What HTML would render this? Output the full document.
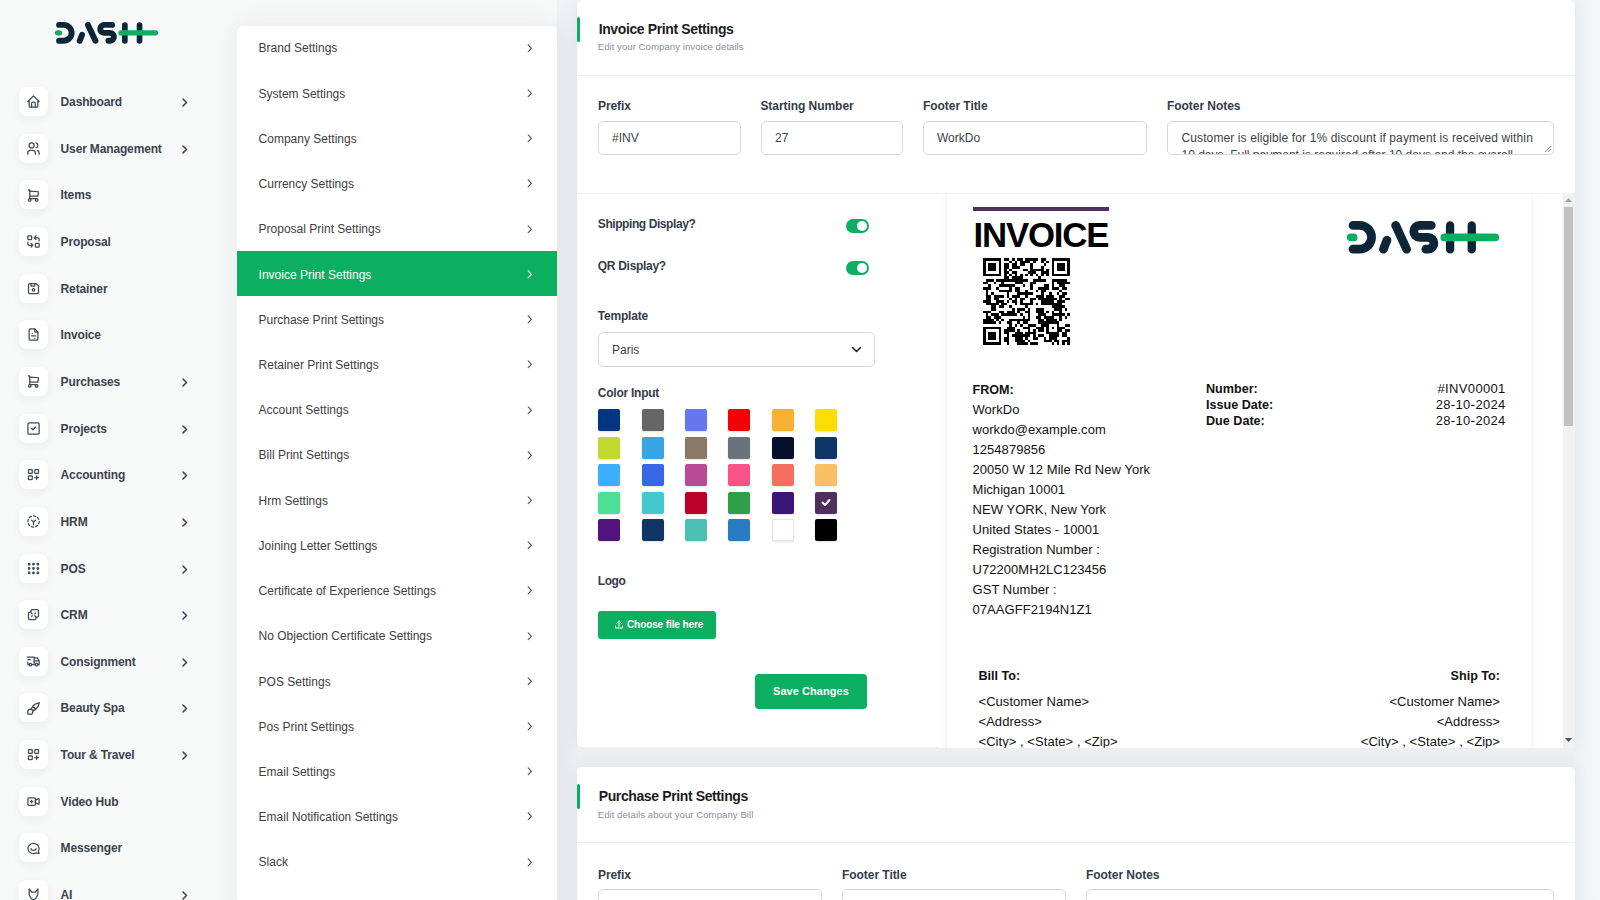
<!DOCTYPE html><html><head><meta charset="utf-8"><style>
*{box-sizing:border-box;margin:0;padding:0}
html,body{width:1600px;height:900px;overflow:hidden}
body{position:relative;background:#f6f7f8;font-family:"Liberation Sans",sans-serif}
.t{position:absolute;white-space:nowrap}
.abs{position:absolute}
</style></head><body>
<div class="abs" style="left:0;top:0;width:557px;height:900px;background:#f7f8f8"></div>
<div class="abs" style="left:557px;top:0;width:20px;height:900px;background:linear-gradient(180deg,#f0f2f4 0px,#eceef1 40px)"></div>
<div class="abs" style="left:1575px;top:0;width:25px;height:900px;background:linear-gradient(90deg,#eef0f2 0%,#f2f4f5 50%,#f4f6f6 100%)"></div>
<svg class="abs" style="left:54.7px;top:22.2px" width="103.1" height="21.9" viewBox="105 100 1390 300" preserveAspectRatio="none"><g fill="none" stroke-linecap="round">
<path d="M160 140 H221 A108.5 108.5 0 0 1 221 357 H160" stroke="#0c2638" stroke-width="80"/>
<path d="M438 358 L470 275 M550 140 L650 358" stroke="#0c2638" stroke-width="80"/>
<path d="M875 140 H770 A55 55 0 0 0 770 250 H846 A53.5 53.5 0 0 1 846 357 H825" stroke="#0c2638" stroke-width="80"/>
<path d="M1047 140 V360 M1245 140 V360" stroke="#0c2638" stroke-width="76"/>
<path d="M140 250 H165 M995 250 H1460" stroke="#0caf60" stroke-width="72"/>
</g></svg>
<div class="abs" style="left:18.5px;top:87.00px;width:29px;height:29px;border-radius:8px;background:#fff;box-shadow:0 3px 8px rgba(60,70,90,.06)"></div>
<svg class="abs" style="left:25.5px;top:94.20px" width="15" height="15" viewBox="0 0 24 24" fill="none" stroke="#3f4958" stroke-width="2" stroke-linecap="round" stroke-linejoin="round"><path d="M5 12H3l9-9 9 9h-2"/><path d="M5 12v7a2 2 0 0 0 2 2h10a2 2 0 0 0 2-2v-7"/><path d="M9 21v-6a2 2 0 0 1 2-2h2a2 2 0 0 1 2 2v6"/></svg>
<div class="t" style="left:60.6px;top:96.04px;font-size:12px;line-height:12px;font-weight:700;color:#3c434e;letter-spacing:-0.15px;">Dashboard</div>
<svg class="abs" style="left:181px;top:98.00px" width="8" height="9" viewBox="0 0 8 9"><path d="M2 1l3.5 3.5L2 8" fill="none" stroke="#3a4250" stroke-width="1.5" stroke-linecap="round" stroke-linejoin="round"/></svg>
<div class="abs" style="left:18.5px;top:133.65px;width:29px;height:29px;border-radius:8px;background:#fff;box-shadow:0 3px 8px rgba(60,70,90,.06)"></div>
<svg class="abs" style="left:25.5px;top:140.85px" width="15" height="15" viewBox="0 0 24 24" fill="none" stroke="#3f4958" stroke-width="2" stroke-linecap="round" stroke-linejoin="round"><circle cx="9" cy="7" r="4"/><path d="M3 21v-2a4 4 0 0 1 4-4h4a4 4 0 0 1 4 4v2"/><path d="M16 3.13a4 4 0 0 1 0 7.75"/><path d="M21 21v-2a4 4 0 0 0-3-3.85"/></svg>
<div class="t" style="left:60.6px;top:142.69px;font-size:12px;line-height:12px;font-weight:700;color:#3c434e;letter-spacing:-0.15px;">User Management</div>
<svg class="abs" style="left:181px;top:144.65px" width="8" height="9" viewBox="0 0 8 9"><path d="M2 1l3.5 3.5L2 8" fill="none" stroke="#3a4250" stroke-width="1.5" stroke-linecap="round" stroke-linejoin="round"/></svg>
<div class="abs" style="left:18.5px;top:180.30px;width:29px;height:29px;border-radius:8px;background:#fff;box-shadow:0 3px 8px rgba(60,70,90,.06)"></div>
<svg class="abs" style="left:25.5px;top:187.50px" width="15" height="15" viewBox="0 0 24 24" fill="none" stroke="#3f4958" stroke-width="2" stroke-linecap="round" stroke-linejoin="round"><circle cx="6" cy="19" r="2"/><circle cx="17" cy="19" r="2"/><path d="M17 17H6V3H4"/><path d="M6 5l14 1-1 7H6"/></svg>
<div class="t" style="left:60.6px;top:189.34px;font-size:12px;line-height:12px;font-weight:700;color:#3c434e;letter-spacing:-0.15px;">Items</div>
<div class="abs" style="left:18.5px;top:226.95px;width:29px;height:29px;border-radius:8px;background:#fff;box-shadow:0 3px 8px rgba(60,70,90,.06)"></div>
<svg class="abs" style="left:25.5px;top:234.15px" width="15" height="15" viewBox="0 0 24 24" fill="none" stroke="#3f4958" stroke-width="2" stroke-linecap="round" stroke-linejoin="round"><rect x="3" y="3" width="6" height="6" rx="1"/><rect x="15" y="15" width="6" height="6" rx="1"/><path d="M21 11V8a2 2 0 0 0-2-2h-6l3 3m0-6-3 3"/><path d="M3 13v3a2 2 0 0 0 2 2h6l-3-3m0 6 3-3"/></svg>
<div class="t" style="left:60.6px;top:235.99px;font-size:12px;line-height:12px;font-weight:700;color:#3c434e;letter-spacing:-0.15px;">Proposal</div>
<div class="abs" style="left:18.5px;top:273.60px;width:29px;height:29px;border-radius:8px;background:#fff;box-shadow:0 3px 8px rgba(60,70,90,.06)"></div>
<svg class="abs" style="left:25.5px;top:280.80px" width="15" height="15" viewBox="0 0 24 24" fill="none" stroke="#3f4958" stroke-width="2" stroke-linecap="round" stroke-linejoin="round"><path d="M6 4h10l4 4v10a2 2 0 0 1-2 2H6a2 2 0 0 1-2-2V6a2 2 0 0 1 2-2"/><circle cx="12" cy="14" r="2"/><path d="M14 4v4H8V4"/></svg>
<div class="t" style="left:60.6px;top:282.64px;font-size:12px;line-height:12px;font-weight:700;color:#3c434e;letter-spacing:-0.15px;">Retainer</div>
<div class="abs" style="left:18.5px;top:320.25px;width:29px;height:29px;border-radius:8px;background:#fff;box-shadow:0 3px 8px rgba(60,70,90,.06)"></div>
<svg class="abs" style="left:25.5px;top:327.45px" width="15" height="15" viewBox="0 0 24 24" fill="none" stroke="#3f4958" stroke-width="2" stroke-linecap="round" stroke-linejoin="round"><path d="M14 3v4a1 1 0 0 0 1 1h4"/><path d="M17 21H7a2 2 0 0 1-2-2V5a2 2 0 0 1 2-2h7l5 5v11a2 2 0 0 1-2 2z"/><path d="M9 14h6"/><path d="M10 10v.01M14 18v.01"/></svg>
<div class="t" style="left:60.6px;top:329.29px;font-size:12px;line-height:12px;font-weight:700;color:#3c434e;letter-spacing:-0.15px;">Invoice</div>
<div class="abs" style="left:18.5px;top:366.90px;width:29px;height:29px;border-radius:8px;background:#fff;box-shadow:0 3px 8px rgba(60,70,90,.06)"></div>
<svg class="abs" style="left:25.5px;top:374.10px" width="15" height="15" viewBox="0 0 24 24" fill="none" stroke="#3f4958" stroke-width="2" stroke-linecap="round" stroke-linejoin="round"><circle cx="6" cy="19" r="2"/><circle cx="17" cy="19" r="2"/><path d="M17 17H6V3H4"/><path d="M6 5l14 1-1 7H6"/></svg>
<div class="t" style="left:60.6px;top:375.94px;font-size:12px;line-height:12px;font-weight:700;color:#3c434e;letter-spacing:-0.15px;">Purchases</div>
<svg class="abs" style="left:181px;top:377.90px" width="8" height="9" viewBox="0 0 8 9"><path d="M2 1l3.5 3.5L2 8" fill="none" stroke="#3a4250" stroke-width="1.5" stroke-linecap="round" stroke-linejoin="round"/></svg>
<div class="abs" style="left:18.5px;top:413.55px;width:29px;height:29px;border-radius:8px;background:#fff;box-shadow:0 3px 8px rgba(60,70,90,.06)"></div>
<svg class="abs" style="left:25.5px;top:420.75px" width="15" height="15" viewBox="0 0 24 24" fill="none" stroke="#3f4958" stroke-width="2" stroke-linecap="round" stroke-linejoin="round"><rect x="3" y="3" width="18" height="18" rx="2"/><path d="M9 12l2 2 4-4"/></svg>
<div class="t" style="left:60.6px;top:422.59px;font-size:12px;line-height:12px;font-weight:700;color:#3c434e;letter-spacing:-0.15px;">Projects</div>
<svg class="abs" style="left:181px;top:424.55px" width="8" height="9" viewBox="0 0 8 9"><path d="M2 1l3.5 3.5L2 8" fill="none" stroke="#3a4250" stroke-width="1.5" stroke-linecap="round" stroke-linejoin="round"/></svg>
<div class="abs" style="left:18.5px;top:460.20px;width:29px;height:29px;border-radius:8px;background:#fff;box-shadow:0 3px 8px rgba(60,70,90,.06)"></div>
<svg class="abs" style="left:25.5px;top:467.40px" width="15" height="15" viewBox="0 0 24 24" fill="none" stroke="#3f4958" stroke-width="2" stroke-linecap="round" stroke-linejoin="round"><rect x="4" y="4" width="6" height="6" rx="1"/><rect x="14" y="4" width="6" height="6" rx="1"/><rect x="4" y="14" width="6" height="6" rx="1"/><path d="M14 17h6m-3-3v6"/></svg>
<div class="t" style="left:60.6px;top:469.24px;font-size:12px;line-height:12px;font-weight:700;color:#3c434e;letter-spacing:-0.15px;">Accounting</div>
<svg class="abs" style="left:181px;top:471.20px" width="8" height="9" viewBox="0 0 8 9"><path d="M2 1l3.5 3.5L2 8" fill="none" stroke="#3a4250" stroke-width="1.5" stroke-linecap="round" stroke-linejoin="round"/></svg>
<div class="abs" style="left:18.5px;top:506.85px;width:29px;height:29px;border-radius:8px;background:#fff;box-shadow:0 3px 8px rgba(60,70,90,.06)"></div>
<svg class="abs" style="left:25.5px;top:514.05px" width="15" height="15" viewBox="0 0 24 24" fill="none" stroke="#3f4958" stroke-width="2" stroke-linecap="round" stroke-linejoin="round"><path d="M8.56 3.69a9 9 0 0 0-2.92 1.95M3.69 8.56A9 9 0 0 0 3 12M3.69 15.44a9 9 0 0 0 1.95 2.92M8.56 20.31A9 9 0 0 0 12 21M15.44 20.31a9 9 0 0 0 2.92-1.95M20.31 15.44A9 9 0 0 0 21 12M20.31 8.56a9 9 0 0 0-1.95-2.92M15.44 3.69A9 9 0 0 0 12 3"/><path d="M9 10l3 3 3-3M12 13v4"/></svg>
<div class="t" style="left:60.6px;top:515.89px;font-size:12px;line-height:12px;font-weight:700;color:#3c434e;letter-spacing:-0.15px;">HRM</div>
<svg class="abs" style="left:181px;top:517.85px" width="8" height="9" viewBox="0 0 8 9"><path d="M2 1l3.5 3.5L2 8" fill="none" stroke="#3a4250" stroke-width="1.5" stroke-linecap="round" stroke-linejoin="round"/></svg>
<div class="abs" style="left:18.5px;top:553.50px;width:29px;height:29px;border-radius:8px;background:#fff;box-shadow:0 3px 8px rgba(60,70,90,.06)"></div>
<svg class="abs" style="left:25.5px;top:560.70px" width="15" height="15" viewBox="0 0 24 24" fill="none" stroke="#3f4958" stroke-width="2" stroke-linecap="round" stroke-linejoin="round"><circle cx="5" cy="5" r="1.3"/><circle cx="12" cy="5" r="1.3"/><circle cx="19" cy="5" r="1.3"/><circle cx="5" cy="12" r="1.3"/><circle cx="12" cy="12" r="1.3"/><circle cx="19" cy="12" r="1.3"/><circle cx="5" cy="19" r="1.3"/><circle cx="12" cy="19" r="1.3"/><circle cx="19" cy="19" r="1.3"/></svg>
<div class="t" style="left:60.6px;top:562.54px;font-size:12px;line-height:12px;font-weight:700;color:#3c434e;letter-spacing:-0.15px;">POS</div>
<svg class="abs" style="left:181px;top:564.50px" width="8" height="9" viewBox="0 0 8 9"><path d="M2 1l3.5 3.5L2 8" fill="none" stroke="#3a4250" stroke-width="1.5" stroke-linecap="round" stroke-linejoin="round"/></svg>
<div class="abs" style="left:18.5px;top:600.15px;width:29px;height:29px;border-radius:8px;background:#fff;box-shadow:0 3px 8px rgba(60,70,90,.06)"></div>
<svg class="abs" style="left:25.5px;top:607.35px" width="15" height="15" viewBox="0 0 24 24" fill="none" stroke="#3f4958" stroke-width="2" stroke-linecap="round" stroke-linejoin="round"><path d="M8 8h-2a2 2 0 0 0-2 2v8a2 2 0 0 0 2 2h8a2 2 0 0 0 2-2v-2"/><path d="M8 8V6a2 2 0 0 1 2-2h8a2 2 0 0 1 2 2v8a2 2 0 0 1-2 2h-2"/><path d="M9 10l1 1M15 10l-1 1M9 15l1-1M15 15l-1-1"/></svg>
<div class="t" style="left:60.6px;top:609.19px;font-size:12px;line-height:12px;font-weight:700;color:#3c434e;letter-spacing:-0.15px;">CRM</div>
<svg class="abs" style="left:181px;top:611.15px" width="8" height="9" viewBox="0 0 8 9"><path d="M2 1l3.5 3.5L2 8" fill="none" stroke="#3a4250" stroke-width="1.5" stroke-linecap="round" stroke-linejoin="round"/></svg>
<div class="abs" style="left:18.5px;top:646.80px;width:29px;height:29px;border-radius:8px;background:#fff;box-shadow:0 3px 8px rgba(60,70,90,.06)"></div>
<svg class="abs" style="left:25.5px;top:654.00px" width="15" height="15" viewBox="0 0 24 24" fill="none" stroke="#3f4958" stroke-width="2" stroke-linecap="round" stroke-linejoin="round"><circle cx="7" cy="17" r="2"/><circle cx="17" cy="17" r="2"/><path d="M5 17H3v-4M2 5h11v12m-4 0h6m4 0h2v-6h-8m0-5h5l3 5"/><path d="M3 9h4"/></svg>
<div class="t" style="left:60.6px;top:655.84px;font-size:12px;line-height:12px;font-weight:700;color:#3c434e;letter-spacing:-0.15px;">Consignment</div>
<svg class="abs" style="left:181px;top:657.80px" width="8" height="9" viewBox="0 0 8 9"><path d="M2 1l3.5 3.5L2 8" fill="none" stroke="#3a4250" stroke-width="1.5" stroke-linecap="round" stroke-linejoin="round"/></svg>
<div class="abs" style="left:18.5px;top:693.45px;width:29px;height:29px;border-radius:8px;background:#fff;box-shadow:0 3px 8px rgba(60,70,90,.06)"></div>
<svg class="abs" style="left:25.5px;top:700.65px" width="15" height="15" viewBox="0 0 24 24" fill="none" stroke="#3f4958" stroke-width="2" stroke-linecap="round" stroke-linejoin="round"><path d="M3 21v-4a4 4 0 1 1 4 4H3"/><path d="M21 3A16 16 0 0 0 8.2 13.2"/><path d="M21 3a16 16 0 0 1-10.2 12.8"/><path d="M10.6 9a9 9 0 0 1 4.4 4.4"/></svg>
<div class="t" style="left:60.6px;top:702.49px;font-size:12px;line-height:12px;font-weight:700;color:#3c434e;letter-spacing:-0.15px;">Beauty Spa</div>
<svg class="abs" style="left:181px;top:704.45px" width="8" height="9" viewBox="0 0 8 9"><path d="M2 1l3.5 3.5L2 8" fill="none" stroke="#3a4250" stroke-width="1.5" stroke-linecap="round" stroke-linejoin="round"/></svg>
<div class="abs" style="left:18.5px;top:740.10px;width:29px;height:29px;border-radius:8px;background:#fff;box-shadow:0 3px 8px rgba(60,70,90,.06)"></div>
<svg class="abs" style="left:25.5px;top:747.30px" width="15" height="15" viewBox="0 0 24 24" fill="none" stroke="#3f4958" stroke-width="2" stroke-linecap="round" stroke-linejoin="round"><rect x="4" y="4" width="6" height="6" rx="1"/><rect x="14" y="4" width="6" height="6" rx="1"/><rect x="4" y="14" width="6" height="6" rx="1"/><path d="M14 17h6m-3-3v6"/></svg>
<div class="t" style="left:60.6px;top:749.14px;font-size:12px;line-height:12px;font-weight:700;color:#3c434e;letter-spacing:-0.15px;">Tour &amp; Travel</div>
<svg class="abs" style="left:181px;top:751.10px" width="8" height="9" viewBox="0 0 8 9"><path d="M2 1l3.5 3.5L2 8" fill="none" stroke="#3a4250" stroke-width="1.5" stroke-linecap="round" stroke-linejoin="round"/></svg>
<div class="abs" style="left:18.5px;top:786.75px;width:29px;height:29px;border-radius:8px;background:#fff;box-shadow:0 3px 8px rgba(60,70,90,.06)"></div>
<svg class="abs" style="left:25.5px;top:793.95px" width="15" height="15" viewBox="0 0 24 24" fill="none" stroke="#3f4958" stroke-width="2" stroke-linecap="round" stroke-linejoin="round"><path d="M15 10l4.553-2.276A1 1 0 0 1 21 8.618v6.764a1 1 0 0 1-1.447.894L15 14v-4z"/><rect x="3" y="6" width="12" height="12" rx="2"/><path d="M7 12h4M9 10v4"/></svg>
<div class="t" style="left:60.6px;top:795.79px;font-size:12px;line-height:12px;font-weight:700;color:#3c434e;letter-spacing:-0.15px;">Video Hub</div>
<div class="abs" style="left:18.5px;top:833.40px;width:29px;height:29px;border-radius:8px;background:#fff;box-shadow:0 3px 8px rgba(60,70,90,.06)"></div>
<svg class="abs" style="left:25.5px;top:840.60px" width="15" height="15" viewBox="0 0 24 24" fill="none" stroke="#3f4958" stroke-width="2" stroke-linecap="round" stroke-linejoin="round"><path d="M21 20l-1.3-3.9A9 8 0 1 0 16.3 19L21 20"/><path d="M8 12a4 3 0 0 0 8 0"/></svg>
<div class="t" style="left:60.6px;top:842.44px;font-size:12px;line-height:12px;font-weight:700;color:#3c434e;letter-spacing:-0.15px;">Messenger</div>
<div class="abs" style="left:18.5px;top:880.05px;width:29px;height:29px;border-radius:8px;background:#fff;box-shadow:0 3px 8px rgba(60,70,90,.06)"></div>
<svg class="abs" style="left:25.5px;top:887.25px" width="15" height="15" viewBox="0 0 24 24" fill="none" stroke="#3f4958" stroke-width="2" stroke-linecap="round" stroke-linejoin="round"><path d="M5 3l4 5h6l4-5v9l-3 6-4 3-4-3-3-6z"/></svg>
<div class="t" style="left:60.6px;top:889.09px;font-size:12px;line-height:12px;font-weight:700;color:#3c434e;letter-spacing:-0.15px;">AI</div>
<svg class="abs" style="left:181px;top:891.05px" width="8" height="9" viewBox="0 0 8 9"><path d="M2 1l3.5 3.5L2 8" fill="none" stroke="#3a4250" stroke-width="1.5" stroke-linecap="round" stroke-linejoin="round"/></svg>
<div class="abs" style="left:237px;top:26px;width:320px;height:900px;background:#fff;border-radius:6px;box-shadow:0 0 28px rgba(40,50,70,.075)"></div>
<div class="t" style="left:258.6px;top:42.44px;font-size:12px;line-height:12px;font-weight:400;color:#404040;letter-spacing:0px;">Brand Settings</div>
<svg class="abs" style="left:526px;top:43.75px" width="8" height="9" viewBox="0 0 8 9"><path d="M2.2 0.9l3.2 3.4-3.2 3.4" fill="none" stroke="#555" stroke-width="1.15" stroke-linecap="round" stroke-linejoin="round"/></svg>
<div class="t" style="left:258.6px;top:87.66px;font-size:12px;line-height:12px;font-weight:400;color:#404040;letter-spacing:0px;">System Settings</div>
<svg class="abs" style="left:526px;top:88.97px" width="8" height="9" viewBox="0 0 8 9"><path d="M2.2 0.9l3.2 3.4-3.2 3.4" fill="none" stroke="#555" stroke-width="1.15" stroke-linecap="round" stroke-linejoin="round"/></svg>
<div class="t" style="left:258.6px;top:132.88px;font-size:12px;line-height:12px;font-weight:400;color:#404040;letter-spacing:0px;">Company Settings</div>
<svg class="abs" style="left:526px;top:134.19px" width="8" height="9" viewBox="0 0 8 9"><path d="M2.2 0.9l3.2 3.4-3.2 3.4" fill="none" stroke="#555" stroke-width="1.15" stroke-linecap="round" stroke-linejoin="round"/></svg>
<div class="t" style="left:258.6px;top:178.10px;font-size:12px;line-height:12px;font-weight:400;color:#404040;letter-spacing:0px;">Currency Settings</div>
<svg class="abs" style="left:526px;top:179.41px" width="8" height="9" viewBox="0 0 8 9"><path d="M2.2 0.9l3.2 3.4-3.2 3.4" fill="none" stroke="#555" stroke-width="1.15" stroke-linecap="round" stroke-linejoin="round"/></svg>
<div class="t" style="left:258.6px;top:223.32px;font-size:12px;line-height:12px;font-weight:400;color:#404040;letter-spacing:0px;">Proposal Print Settings</div>
<svg class="abs" style="left:526px;top:224.63px" width="8" height="9" viewBox="0 0 8 9"><path d="M2.2 0.9l3.2 3.4-3.2 3.4" fill="none" stroke="#555" stroke-width="1.15" stroke-linecap="round" stroke-linejoin="round"/></svg>
<div class="abs" style="left:237px;top:250.85px;width:320px;height:45px;background:#0caf60"></div>
<div class="t" style="left:258.6px;top:268.54px;font-size:12px;line-height:12px;font-weight:400;color:#ffffff;letter-spacing:0px;">Invoice Print Settings</div>
<svg class="abs" style="left:526px;top:269.85px" width="8" height="9" viewBox="0 0 8 9"><path d="M2.2 0.9l3.2 3.4-3.2 3.4" fill="none" stroke="#fff" stroke-width="1.15" stroke-linecap="round" stroke-linejoin="round"/></svg>
<div class="t" style="left:258.6px;top:313.76px;font-size:12px;line-height:12px;font-weight:400;color:#404040;letter-spacing:0px;">Purchase Print Settings</div>
<svg class="abs" style="left:526px;top:315.07px" width="8" height="9" viewBox="0 0 8 9"><path d="M2.2 0.9l3.2 3.4-3.2 3.4" fill="none" stroke="#555" stroke-width="1.15" stroke-linecap="round" stroke-linejoin="round"/></svg>
<div class="t" style="left:258.6px;top:358.98px;font-size:12px;line-height:12px;font-weight:400;color:#404040;letter-spacing:0px;">Retainer Print Settings</div>
<svg class="abs" style="left:526px;top:360.29px" width="8" height="9" viewBox="0 0 8 9"><path d="M2.2 0.9l3.2 3.4-3.2 3.4" fill="none" stroke="#555" stroke-width="1.15" stroke-linecap="round" stroke-linejoin="round"/></svg>
<div class="t" style="left:258.6px;top:404.20px;font-size:12px;line-height:12px;font-weight:400;color:#404040;letter-spacing:0px;">Account Settings</div>
<svg class="abs" style="left:526px;top:405.51px" width="8" height="9" viewBox="0 0 8 9"><path d="M2.2 0.9l3.2 3.4-3.2 3.4" fill="none" stroke="#555" stroke-width="1.15" stroke-linecap="round" stroke-linejoin="round"/></svg>
<div class="t" style="left:258.6px;top:449.42px;font-size:12px;line-height:12px;font-weight:400;color:#404040;letter-spacing:0px;">Bill Print Settings</div>
<svg class="abs" style="left:526px;top:450.73px" width="8" height="9" viewBox="0 0 8 9"><path d="M2.2 0.9l3.2 3.4-3.2 3.4" fill="none" stroke="#555" stroke-width="1.15" stroke-linecap="round" stroke-linejoin="round"/></svg>
<div class="t" style="left:258.6px;top:494.64px;font-size:12px;line-height:12px;font-weight:400;color:#404040;letter-spacing:0px;">Hrm Settings</div>
<svg class="abs" style="left:526px;top:495.95px" width="8" height="9" viewBox="0 0 8 9"><path d="M2.2 0.9l3.2 3.4-3.2 3.4" fill="none" stroke="#555" stroke-width="1.15" stroke-linecap="round" stroke-linejoin="round"/></svg>
<div class="t" style="left:258.6px;top:539.86px;font-size:12px;line-height:12px;font-weight:400;color:#404040;letter-spacing:0px;">Joining Letter Settings</div>
<svg class="abs" style="left:526px;top:541.17px" width="8" height="9" viewBox="0 0 8 9"><path d="M2.2 0.9l3.2 3.4-3.2 3.4" fill="none" stroke="#555" stroke-width="1.15" stroke-linecap="round" stroke-linejoin="round"/></svg>
<div class="t" style="left:258.6px;top:585.08px;font-size:12px;line-height:12px;font-weight:400;color:#404040;letter-spacing:0px;">Certificate of Experience Settings</div>
<svg class="abs" style="left:526px;top:586.39px" width="8" height="9" viewBox="0 0 8 9"><path d="M2.2 0.9l3.2 3.4-3.2 3.4" fill="none" stroke="#555" stroke-width="1.15" stroke-linecap="round" stroke-linejoin="round"/></svg>
<div class="t" style="left:258.6px;top:630.30px;font-size:12px;line-height:12px;font-weight:400;color:#404040;letter-spacing:0px;">No Objection Certificate Settings</div>
<svg class="abs" style="left:526px;top:631.61px" width="8" height="9" viewBox="0 0 8 9"><path d="M2.2 0.9l3.2 3.4-3.2 3.4" fill="none" stroke="#555" stroke-width="1.15" stroke-linecap="round" stroke-linejoin="round"/></svg>
<div class="t" style="left:258.6px;top:675.52px;font-size:12px;line-height:12px;font-weight:400;color:#404040;letter-spacing:0px;">POS Settings</div>
<svg class="abs" style="left:526px;top:676.83px" width="8" height="9" viewBox="0 0 8 9"><path d="M2.2 0.9l3.2 3.4-3.2 3.4" fill="none" stroke="#555" stroke-width="1.15" stroke-linecap="round" stroke-linejoin="round"/></svg>
<div class="t" style="left:258.6px;top:720.74px;font-size:12px;line-height:12px;font-weight:400;color:#404040;letter-spacing:0px;">Pos Print Settings</div>
<svg class="abs" style="left:526px;top:722.05px" width="8" height="9" viewBox="0 0 8 9"><path d="M2.2 0.9l3.2 3.4-3.2 3.4" fill="none" stroke="#555" stroke-width="1.15" stroke-linecap="round" stroke-linejoin="round"/></svg>
<div class="t" style="left:258.6px;top:765.96px;font-size:12px;line-height:12px;font-weight:400;color:#404040;letter-spacing:0px;">Email Settings</div>
<svg class="abs" style="left:526px;top:767.27px" width="8" height="9" viewBox="0 0 8 9"><path d="M2.2 0.9l3.2 3.4-3.2 3.4" fill="none" stroke="#555" stroke-width="1.15" stroke-linecap="round" stroke-linejoin="round"/></svg>
<div class="t" style="left:258.6px;top:811.18px;font-size:12px;line-height:12px;font-weight:400;color:#404040;letter-spacing:0px;">Email Notification Settings</div>
<svg class="abs" style="left:526px;top:812.49px" width="8" height="9" viewBox="0 0 8 9"><path d="M2.2 0.9l3.2 3.4-3.2 3.4" fill="none" stroke="#555" stroke-width="1.15" stroke-linecap="round" stroke-linejoin="round"/></svg>
<div class="t" style="left:258.6px;top:856.40px;font-size:12px;line-height:12px;font-weight:400;color:#404040;letter-spacing:0px;">Slack</div>
<svg class="abs" style="left:526px;top:857.71px" width="8" height="9" viewBox="0 0 8 9"><path d="M2.2 0.9l3.2 3.4-3.2 3.4" fill="none" stroke="#555" stroke-width="1.15" stroke-linecap="round" stroke-linejoin="round"/></svg>
<div class="abs" style="left:577px;top:0;width:998px;height:747px;background:#fff;border-radius:8px 8px 0 6px;box-shadow:0 0 20px rgba(40,50,70,.05)"></div>
<div class="abs" style="left:576.5px;top:16.7px;width:3px;height:25.2px;border-radius:2px;background:#0caf60"></div>
<div class="t" style="left:598.7px;top:21.55px;font-size:14px;line-height:14px;font-weight:700;color:#1c1c1c;letter-spacing:-0.38px;">Invoice Print Settings</div>
<div class="t" style="left:597.7px;top:41.79px;font-size:9.7px;line-height:9.7px;font-weight:400;color:#8a93a1;letter-spacing:0px;">Edit your Company invoice details</div>
<div class="abs" style="left:577px;top:75px;width:998px;height:1px;background:#eff1f3"></div>
<div class="t" style="left:598px;top:99.84px;font-size:12px;line-height:12px;font-weight:700;color:#333c4a;letter-spacing:-0.1px;">Prefix</div>
<div class="t" style="left:760.4px;top:99.84px;font-size:12px;line-height:12px;font-weight:700;color:#333c4a;letter-spacing:-0.05px;">Starting Number</div>
<div class="t" style="left:923px;top:99.84px;font-size:12px;line-height:12px;font-weight:700;color:#333c4a;letter-spacing:-0.05px;">Footer Title</div>
<div class="t" style="left:1167px;top:99.84px;font-size:12px;line-height:12px;font-weight:700;color:#333c4a;letter-spacing:-0.05px;">Footer Notes</div>
<div class="abs" style="left:598px;top:121px;width:143px;height:34px;border:1px solid #d5d9df;border-radius:5px;background:#fff;"></div>
<div class="t" style="left:612px;top:132.44px;font-size:12px;line-height:12px;font-weight:400;color:#3a3f47;letter-spacing:0px;">#INV</div>
<div class="abs" style="left:761px;top:121px;width:142px;height:34px;border:1px solid #d5d9df;border-radius:5px;background:#fff;"></div>
<div class="t" style="left:775px;top:132.44px;font-size:12px;line-height:12px;font-weight:400;color:#3a3f47;letter-spacing:0px;">27</div>
<div class="abs" style="left:923px;top:121px;width:224px;height:34px;border:1px solid #d5d9df;border-radius:5px;background:#fff;"></div>
<div class="t" style="left:937px;top:132.44px;font-size:12px;line-height:12px;font-weight:400;color:#3a3f47;letter-spacing:0px;">WorkDo</div>
<div class="abs" style="left:1167px;top:121px;width:387px;height:34px;border:1px solid #d5d9df;border-radius:5px;background:#fff;overflow:hidden"></div>
<div class="t" style="left:1181.5px;top:132.44px;font-size:12px;line-height:12px;font-weight:400;color:#3a3f47;letter-spacing:0.11px;">Customer is eligible for 1% discount if payment is received within</div>
<div class="abs" style="left:1168px;top:147.5px;width:385px;height:6.5px;overflow:hidden">
<div class="t" style="left:13.5px;top:1.3px;font-size:12px;line-height:12px;color:#3a3f47">10 days. Full payment is required after 10 days and the overall</div></div>
<svg class="abs" style="left:1544px;top:145px" width="8" height="8" viewBox="0 0 8 8"><path d="M7 1L1 7M7 4L4 7" stroke="#777" stroke-width="1"/></svg>
<div class="abs" style="left:577px;top:193px;width:998px;height:1px;background:#eff1f3"></div>
<div class="t" style="left:597.8px;top:218.14px;font-size:12px;line-height:12px;font-weight:700;color:#333c4a;letter-spacing:-0.42px;">Shipping Display?</div>
<div class="t" style="left:597.8px;top:259.74px;font-size:12px;line-height:12px;font-weight:700;color:#333c4a;letter-spacing:-0.3px;">QR Display?</div>
<div class="abs" style="left:846px;top:219px;width:23px;height:14px;border-radius:7px;background:#0caf60"></div>
<div class="abs" style="left:857px;top:221px;width:10px;height:10px;border-radius:5px;background:#fff"></div>
<div class="abs" style="left:846px;top:261px;width:23px;height:14px;border-radius:7px;background:#0caf60"></div>
<div class="abs" style="left:857px;top:263px;width:10px;height:10px;border-radius:5px;background:#fff"></div>
<div class="t" style="left:597.8px;top:309.84px;font-size:12px;line-height:12px;font-weight:700;color:#333c4a;letter-spacing:-0.2px;">Template</div>
<div class="abs" style="left:597.5px;top:332px;width:277.5px;height:35px;border:1px solid #d5d9df;border-radius:5px;background:#fff;"></div>
<div class="t" style="left:612px;top:344.24px;font-size:12px;line-height:12px;font-weight:400;color:#3a3f47;letter-spacing:0px;">Paris</div>
<svg class="abs" style="left:851px;top:345px" width="11" height="9" viewBox="0 0 11 9"><path d="M1.5 2.5l4 4 4-4" fill="none" stroke="#222" stroke-width="1.6" stroke-linecap="round" stroke-linejoin="round"/></svg>
<div class="t" style="left:597.8px;top:387.34px;font-size:12px;line-height:12px;font-weight:700;color:#333c4a;letter-spacing:-0.25px;">Color Input</div>
<div class="abs" style="left:598.30px;top:409.00px;width:22px;height:22px;border-radius:2px;background:#003580;box-shadow:0 1px 2px rgba(0,0,0,.12)"></div>
<div class="abs" style="left:641.65px;top:409.00px;width:22px;height:22px;border-radius:2px;background:#666666;box-shadow:0 1px 2px rgba(0,0,0,.12)"></div>
<div class="abs" style="left:685.00px;top:409.00px;width:22px;height:22px;border-radius:2px;background:#6676ef;box-shadow:0 1px 2px rgba(0,0,0,.12)"></div>
<div class="abs" style="left:728.35px;top:409.00px;width:22px;height:22px;border-radius:2px;background:#f50102;box-shadow:0 1px 2px rgba(0,0,0,.12)"></div>
<div class="abs" style="left:771.70px;top:409.00px;width:22px;height:22px;border-radius:2px;background:#f9b034;box-shadow:0 1px 2px rgba(0,0,0,.12)"></div>
<div class="abs" style="left:815.05px;top:409.00px;width:22px;height:22px;border-radius:2px;background:#fbdd03;box-shadow:0 1px 2px rgba(0,0,0,.12)"></div>
<div class="abs" style="left:598.30px;top:436.55px;width:22px;height:22px;border-radius:2px;background:#c1d82f;box-shadow:0 1px 2px rgba(0,0,0,.12)"></div>
<div class="abs" style="left:641.65px;top:436.55px;width:22px;height:22px;border-radius:2px;background:#37a4e4;box-shadow:0 1px 2px rgba(0,0,0,.12)"></div>
<div class="abs" style="left:685.00px;top:436.55px;width:22px;height:22px;border-radius:2px;background:#8a7966;box-shadow:0 1px 2px rgba(0,0,0,.12)"></div>
<div class="abs" style="left:728.35px;top:436.55px;width:22px;height:22px;border-radius:2px;background:#6a737b;box-shadow:0 1px 2px rgba(0,0,0,.12)"></div>
<div class="abs" style="left:771.70px;top:436.55px;width:22px;height:22px;border-radius:2px;background:#050f2c;box-shadow:0 1px 2px rgba(0,0,0,.12)"></div>
<div class="abs" style="left:815.05px;top:436.55px;width:22px;height:22px;border-radius:2px;background:#0e3666;box-shadow:0 1px 2px rgba(0,0,0,.12)"></div>
<div class="abs" style="left:598.30px;top:464.10px;width:22px;height:22px;border-radius:2px;background:#3cadff;box-shadow:0 1px 2px rgba(0,0,0,.12)"></div>
<div class="abs" style="left:641.65px;top:464.10px;width:22px;height:22px;border-radius:2px;background:#3766e6;box-shadow:0 1px 2px rgba(0,0,0,.12)"></div>
<div class="abs" style="left:685.00px;top:464.10px;width:22px;height:22px;border-radius:2px;background:#b74b94;box-shadow:0 1px 2px rgba(0,0,0,.12)"></div>
<div class="abs" style="left:728.35px;top:464.10px;width:22px;height:22px;border-radius:2px;background:#f85286;box-shadow:0 1px 2px rgba(0,0,0,.12)"></div>
<div class="abs" style="left:771.70px;top:464.10px;width:22px;height:22px;border-radius:2px;background:#f56e60;box-shadow:0 1px 2px rgba(0,0,0,.12)"></div>
<div class="abs" style="left:815.05px;top:464.10px;width:22px;height:22px;border-radius:2px;background:#f9bf65;box-shadow:0 1px 2px rgba(0,0,0,.12)"></div>
<div class="abs" style="left:598.30px;top:491.65px;width:22px;height:22px;border-radius:2px;background:#4bdf95;box-shadow:0 1px 2px rgba(0,0,0,.12)"></div>
<div class="abs" style="left:641.65px;top:491.65px;width:22px;height:22px;border-radius:2px;background:#44c8d0;box-shadow:0 1px 2px rgba(0,0,0,.12)"></div>
<div class="abs" style="left:685.00px;top:491.65px;width:22px;height:22px;border-radius:2px;background:#bd0026;box-shadow:0 1px 2px rgba(0,0,0,.12)"></div>
<div class="abs" style="left:728.35px;top:491.65px;width:22px;height:22px;border-radius:2px;background:#2e9e47;box-shadow:0 1px 2px rgba(0,0,0,.12)"></div>
<div class="abs" style="left:771.70px;top:491.65px;width:22px;height:22px;border-radius:2px;background:#3c1677;box-shadow:0 1px 2px rgba(0,0,0,.12)"></div>
<div class="abs" style="left:815.05px;top:491.65px;width:22px;height:22px;border-radius:2px;background:#512f5d;box-shadow:0 1px 2px rgba(0,0,0,.12)"></div>
<svg class="abs" style="left:821.05px;top:498.15px" width="10" height="9" viewBox="0 0 10 9"><path d="M1.5 4.5l2.5 2.5 4.5-5" fill="none" stroke="#fff" stroke-width="2" stroke-linecap="round" stroke-linejoin="round"/></svg>
<div class="abs" style="left:598.30px;top:519.20px;width:22px;height:22px;border-radius:2px;background:#52137a;box-shadow:0 1px 2px rgba(0,0,0,.12)"></div>
<div class="abs" style="left:641.65px;top:519.20px;width:22px;height:22px;border-radius:2px;background:#0e3563;box-shadow:0 1px 2px rgba(0,0,0,.12)"></div>
<div class="abs" style="left:685.00px;top:519.20px;width:22px;height:22px;border-radius:2px;background:#4bbfb4;box-shadow:0 1px 2px rgba(0,0,0,.12)"></div>
<div class="abs" style="left:728.35px;top:519.20px;width:22px;height:22px;border-radius:2px;background:#2a7bc1;box-shadow:0 1px 2px rgba(0,0,0,.12)"></div>
<div class="abs" style="left:771.70px;top:519.20px;width:22px;height:22px;border-radius:2px;background:#ffffff;border:1px solid #e3e3f5;box-shadow:0 1px 2px rgba(0,0,0,.12)"></div>
<div class="abs" style="left:815.05px;top:519.20px;width:22px;height:22px;border-radius:2px;background:#000000;box-shadow:0 1px 2px rgba(0,0,0,.12)"></div>
<div class="t" style="left:597.8px;top:575.14px;font-size:12px;line-height:12px;font-weight:700;color:#333c4a;letter-spacing:-0.45px;">Logo</div>
<div class="abs" style="left:597.5px;top:611px;width:118.5px;height:28px;border-radius:3px;background:#0caf60"></div>
<svg class="abs" style="left:613.5px;top:618.5px" width="10" height="11" viewBox="0 0 10 11"><path d="M1.5 7v2h7V7M5 7.5V2M2.8 4.2L5 2l2.2 2.2" fill="none" stroke="#fff" stroke-width="1" stroke-linecap="round" stroke-linejoin="round"/></svg>
<div class="t" style="left:627px;top:620.33px;font-size:10px;line-height:10px;font-weight:700;color:#ffffff;letter-spacing:-0.1px;">Choose file here</div>
<div class="abs" style="left:755px;top:674px;width:112px;height:35px;border-radius:4px;background:#0caf60"></div>
<div class="t" style="left:773px;top:685.69px;font-size:11px;line-height:11px;font-weight:700;color:#ffffff;letter-spacing:0.05px;">Save Changes</div>
<div class="abs" style="left:938px;top:194px;width:637px;height:554px;overflow:hidden;background:#fff">
<div class="abs" style="left:9px;top:0;width:584px;height:700px;background:#fff;box-shadow:0 0 8px rgba(0,0,0,.07)"></div>
</div>
<div class="abs" style="left:1563px;top:194px;width:12px;height:554px;background:#f1f1f1"></div>
<div class="abs" style="left:1564px;top:207px;width:9px;height:219px;background:#c1c1c1"></div>
<svg class="abs" style="left:1564px;top:197px" width="9" height="6" viewBox="0 0 9 6"><path d="M1 5h7L4.5 1z" fill="#a3a3a3"/></svg>
<svg class="abs" style="left:1564px;top:737px" width="9" height="6" viewBox="0 0 9 6"><path d="M1 1h7L4.5 5z" fill="#505050"/></svg>
<div class="abs" style="left:972.5px;top:206.5px;width:136.5px;height:4.5px;background:#512f5d"></div>
<div class="t" style="left:973.5px;top:217.94px;font-size:34.8px;line-height:34.8px;font-weight:700;color:#000;letter-spacing:-1.2px;">INVOICE</div>
<svg class="abs" style="left:983px;top:257.5px" width="87" height="87" viewBox="0 0 33 33" shape-rendering="crispEdges"><g fill="#000"><rect x="0" y="0" width="7" height="1"/><rect x="8" y="0" width="2" height="1"/><rect x="11" y="0" width="1" height="1"/><rect x="13" y="0" width="2" height="1"/><rect x="16" y="0" width="5" height="1"/><rect x="22" y="0" width="2" height="1"/><rect x="26" y="0" width="7" height="1"/><rect x="0" y="1" width="1" height="1"/><rect x="6" y="1" width="1" height="1"/><rect x="10" y="1" width="1" height="1"/><rect x="12" y="1" width="1" height="1"/><rect x="14" y="1" width="4" height="1"/><rect x="19" y="1" width="1" height="1"/><rect x="22" y="1" width="1" height="1"/><rect x="24" y="1" width="1" height="1"/><rect x="26" y="1" width="1" height="1"/><rect x="32" y="1" width="1" height="1"/><rect x="0" y="2" width="1" height="1"/><rect x="2" y="2" width="3" height="1"/><rect x="6" y="2" width="1" height="1"/><rect x="8" y="2" width="2" height="1"/><rect x="11" y="2" width="2" height="1"/><rect x="14" y="2" width="2" height="1"/><rect x="18" y="2" width="1" height="1"/><rect x="23" y="2" width="1" height="1"/><rect x="26" y="2" width="1" height="1"/><rect x="28" y="2" width="3" height="1"/><rect x="32" y="2" width="1" height="1"/><rect x="0" y="3" width="1" height="1"/><rect x="2" y="3" width="3" height="1"/><rect x="6" y="3" width="1" height="1"/><rect x="8" y="3" width="2" height="1"/><rect x="11" y="3" width="3" height="1"/><rect x="18" y="3" width="1" height="1"/><rect x="22" y="3" width="1" height="1"/><rect x="26" y="3" width="1" height="1"/><rect x="28" y="3" width="3" height="1"/><rect x="32" y="3" width="1" height="1"/><rect x="0" y="4" width="1" height="1"/><rect x="2" y="4" width="3" height="1"/><rect x="6" y="4" width="1" height="1"/><rect x="8" y="4" width="1" height="1"/><rect x="10" y="4" width="1" height="1"/><rect x="15" y="4" width="2" height="1"/><rect x="18" y="4" width="5" height="1"/><rect x="24" y="4" width="1" height="1"/><rect x="26" y="4" width="1" height="1"/><rect x="28" y="4" width="3" height="1"/><rect x="32" y="4" width="1" height="1"/><rect x="0" y="5" width="1" height="1"/><rect x="6" y="5" width="1" height="1"/><rect x="8" y="5" width="2" height="1"/><rect x="11" y="5" width="2" height="1"/><rect x="17" y="5" width="3" height="1"/><rect x="22" y="5" width="3" height="1"/><rect x="26" y="5" width="1" height="1"/><rect x="32" y="5" width="1" height="1"/><rect x="0" y="6" width="7" height="1"/><rect x="8" y="6" width="1" height="1"/><rect x="10" y="6" width="1" height="1"/><rect x="12" y="6" width="1" height="1"/><rect x="14" y="6" width="1" height="1"/><rect x="16" y="6" width="1" height="1"/><rect x="18" y="6" width="1" height="1"/><rect x="20" y="6" width="1" height="1"/><rect x="22" y="6" width="1" height="1"/><rect x="24" y="6" width="1" height="1"/><rect x="26" y="6" width="7" height="1"/><rect x="8" y="7" width="2" height="1"/><rect x="11" y="7" width="4" height="1"/><rect x="21" y="7" width="1" height="1"/><rect x="1" y="8" width="3" height="1"/><rect x="5" y="8" width="12" height="1"/><rect x="19" y="8" width="5" height="1"/><rect x="26" y="8" width="6" height="1"/><rect x="0" y="9" width="2" height="1"/><rect x="4" y="9" width="1" height="1"/><rect x="7" y="9" width="1" height="1"/><rect x="12" y="9" width="3" height="1"/><rect x="18" y="9" width="2" height="1"/><rect x="26" y="9" width="1" height="1"/><rect x="28" y="9" width="5" height="1"/><rect x="2" y="10" width="1" height="1"/><rect x="6" y="10" width="6" height="1"/><rect x="15" y="10" width="1" height="1"/><rect x="18" y="10" width="1" height="1"/><rect x="23" y="10" width="2" height="1"/><rect x="26" y="10" width="1" height="1"/><rect x="29" y="10" width="2" height="1"/><rect x="0" y="11" width="3" height="1"/><rect x="5" y="11" width="1" height="1"/><rect x="10" y="11" width="1" height="1"/><rect x="12" y="11" width="2" height="1"/><rect x="18" y="11" width="1" height="1"/><rect x="21" y="11" width="4" height="1"/><rect x="26" y="11" width="3" height="1"/><rect x="30" y="11" width="2" height="1"/><rect x="1" y="12" width="1" height="1"/><rect x="6" y="12" width="5" height="1"/><rect x="12" y="12" width="2" height="1"/><rect x="16" y="12" width="1" height="1"/><rect x="20" y="12" width="1" height="1"/><rect x="22" y="12" width="2" height="1"/><rect x="29" y="12" width="1" height="1"/><rect x="1" y="13" width="1" height="1"/><rect x="3" y="13" width="1" height="1"/><rect x="9" y="13" width="1" height="1"/><rect x="13" y="13" width="6" height="1"/><rect x="22" y="13" width="1" height="1"/><rect x="25" y="13" width="1" height="1"/><rect x="28" y="13" width="1" height="1"/><rect x="30" y="13" width="2" height="1"/><rect x="1" y="14" width="2" height="1"/><rect x="4" y="14" width="4" height="1"/><rect x="9" y="14" width="1" height="1"/><rect x="11" y="14" width="3" height="1"/><rect x="16" y="14" width="1" height="1"/><rect x="20" y="14" width="3" height="1"/><rect x="24" y="14" width="3" height="1"/><rect x="29" y="14" width="2" height="1"/><rect x="1" y="15" width="2" height="1"/><rect x="4" y="15" width="2" height="1"/><rect x="10" y="15" width="1" height="1"/><rect x="12" y="15" width="1" height="1"/><rect x="14" y="15" width="2" height="1"/><rect x="18" y="15" width="2" height="1"/><rect x="21" y="15" width="7" height="1"/><rect x="29" y="15" width="1" height="1"/><rect x="31" y="15" width="2" height="1"/><rect x="0" y="16" width="3" height="1"/><rect x="5" y="16" width="3" height="1"/><rect x="9" y="16" width="1" height="1"/><rect x="11" y="16" width="2" height="1"/><rect x="14" y="16" width="1" height="1"/><rect x="18" y="16" width="1" height="1"/><rect x="22" y="16" width="5" height="1"/><rect x="28" y="16" width="3" height="1"/><rect x="1" y="17" width="5" height="1"/><rect x="7" y="17" width="2" height="1"/><rect x="12" y="17" width="1" height="1"/><rect x="14" y="17" width="5" height="1"/><rect x="20" y="17" width="1" height="1"/><rect x="22" y="17" width="8" height="1"/><rect x="3" y="18" width="2" height="1"/><rect x="6" y="18" width="2" height="1"/><rect x="10" y="18" width="1" height="1"/><rect x="16" y="18" width="1" height="1"/><rect x="26" y="18" width="5" height="1"/><rect x="3" y="19" width="2" height="1"/><rect x="11" y="19" width="1" height="1"/><rect x="13" y="19" width="3" height="1"/><rect x="17" y="19" width="1" height="1"/><rect x="20" y="19" width="3" height="1"/><rect x="27" y="19" width="3" height="1"/><rect x="31" y="19" width="1" height="1"/><rect x="0" y="20" width="3" height="1"/><rect x="6" y="20" width="2" height="1"/><rect x="9" y="20" width="3" height="1"/><rect x="13" y="20" width="1" height="1"/><rect x="16" y="20" width="2" height="1"/><rect x="20" y="20" width="3" height="1"/><rect x="24" y="20" width="1" height="1"/><rect x="26" y="20" width="1" height="1"/><rect x="29" y="20" width="1" height="1"/><rect x="1" y="21" width="1" height="1"/><rect x="3" y="21" width="3" height="1"/><rect x="7" y="21" width="6" height="1"/><rect x="14" y="21" width="1" height="1"/><rect x="17" y="21" width="1" height="1"/><rect x="21" y="21" width="3" height="1"/><rect x="26" y="21" width="5" height="1"/><rect x="32" y="21" width="1" height="1"/><rect x="1" y="22" width="2" height="1"/><rect x="4" y="22" width="3" height="1"/><rect x="15" y="22" width="1" height="1"/><rect x="17" y="22" width="1" height="1"/><rect x="20" y="22" width="2" height="1"/><rect x="23" y="22" width="4" height="1"/><rect x="29" y="22" width="1" height="1"/><rect x="31" y="22" width="1" height="1"/><rect x="0" y="23" width="4" height="1"/><rect x="5" y="23" width="1" height="1"/><rect x="7" y="23" width="1" height="1"/><rect x="10" y="23" width="8" height="1"/><rect x="21" y="23" width="2" height="1"/><rect x="24" y="23" width="4" height="1"/><rect x="29" y="23" width="1" height="1"/><rect x="0" y="24" width="5" height="1"/><rect x="6" y="24" width="1" height="1"/><rect x="9" y="24" width="2" height="1"/><rect x="13" y="24" width="1" height="1"/><rect x="15" y="24" width="2" height="1"/><rect x="21" y="24" width="8" height="1"/><rect x="10" y="25" width="1" height="1"/><rect x="12" y="25" width="1" height="1"/><rect x="14" y="25" width="1" height="1"/><rect x="17" y="25" width="3" height="1"/><rect x="22" y="25" width="3" height="1"/><rect x="28" y="25" width="1" height="1"/><rect x="31" y="25" width="2" height="1"/><rect x="0" y="26" width="7" height="1"/><rect x="9" y="26" width="3" height="1"/><rect x="15" y="26" width="3" height="1"/><rect x="20" y="26" width="3" height="1"/><rect x="24" y="26" width="1" height="1"/><rect x="26" y="26" width="1" height="1"/><rect x="28" y="26" width="3" height="1"/><rect x="0" y="27" width="1" height="1"/><rect x="6" y="27" width="1" height="1"/><rect x="8" y="27" width="4" height="1"/><rect x="13" y="27" width="1" height="1"/><rect x="17" y="27" width="1" height="1"/><rect x="19" y="27" width="1" height="1"/><rect x="21" y="27" width="2" height="1"/><rect x="24" y="27" width="1" height="1"/><rect x="28" y="27" width="2" height="1"/><rect x="31" y="27" width="2" height="1"/><rect x="0" y="28" width="1" height="1"/><rect x="2" y="28" width="3" height="1"/><rect x="6" y="28" width="1" height="1"/><rect x="8" y="28" width="2" height="1"/><rect x="12" y="28" width="3" height="1"/><rect x="16" y="28" width="4" height="1"/><rect x="24" y="28" width="5" height="1"/><rect x="30" y="28" width="2" height="1"/><rect x="0" y="29" width="1" height="1"/><rect x="2" y="29" width="3" height="1"/><rect x="6" y="29" width="1" height="1"/><rect x="9" y="29" width="1" height="1"/><rect x="11" y="29" width="7" height="1"/><rect x="19" y="29" width="1" height="1"/><rect x="21" y="29" width="2" height="1"/><rect x="25" y="29" width="4" height="1"/><rect x="30" y="29" width="2" height="1"/><rect x="0" y="30" width="1" height="1"/><rect x="2" y="30" width="3" height="1"/><rect x="6" y="30" width="1" height="1"/><rect x="8" y="30" width="2" height="1"/><rect x="12" y="30" width="3" height="1"/><rect x="16" y="30" width="1" height="1"/><rect x="19" y="30" width="2" height="1"/><rect x="23" y="30" width="1" height="1"/><rect x="25" y="30" width="3" height="1"/><rect x="32" y="30" width="1" height="1"/><rect x="0" y="31" width="1" height="1"/><rect x="6" y="31" width="1" height="1"/><rect x="8" y="31" width="2" height="1"/><rect x="12" y="31" width="4" height="1"/><rect x="17" y="31" width="1" height="1"/><rect x="23" y="31" width="3" height="1"/><rect x="27" y="31" width="2" height="1"/><rect x="30" y="31" width="3" height="1"/><rect x="0" y="32" width="7" height="1"/><rect x="9" y="32" width="1" height="1"/><rect x="13" y="32" width="4" height="1"/><rect x="18" y="32" width="3" height="1"/><rect x="26" y="32" width="1" height="1"/><rect x="28" y="32" width="1" height="1"/><rect x="30" y="32" width="1" height="1"/><rect x="32" y="32" width="1" height="1"/></g></svg>
<svg class="abs" style="left:1346.5px;top:221px" width="152.1" height="32.8" viewBox="105 100 1390 300" preserveAspectRatio="none"><g fill="none" stroke-linecap="round">
<path d="M160 140 H221 A108.5 108.5 0 0 1 221 357 H160" stroke="#0c2638" stroke-width="80"/>
<path d="M438 358 L470 275 M550 140 L650 358" stroke="#0c2638" stroke-width="80"/>
<path d="M875 140 H770 A55 55 0 0 0 770 250 H846 A53.5 53.5 0 0 1 846 357 H825" stroke="#0c2638" stroke-width="80"/>
<path d="M1047 140 V360 M1245 140 V360" stroke="#0c2638" stroke-width="76"/>
<path d="M140 250 H165 M995 250 H1460" stroke="#0caf60" stroke-width="72"/>
</g></svg>
<div class="t" style="left:972.5px;top:383.83px;font-size:12.6px;line-height:12.6px;font-weight:700;color:#111;letter-spacing:0px;">FROM:</div>
<div class="t" style="left:972.5px;top:402.50px;font-size:13px;line-height:13px;font-weight:400;color:#111;letter-spacing:0.05px;">WorkDo</div>
<div class="t" style="left:972.5px;top:422.50px;font-size:13px;line-height:13px;font-weight:400;color:#111;letter-spacing:0.05px;">workdo@example.com</div>
<div class="t" style="left:972.5px;top:442.50px;font-size:13px;line-height:13px;font-weight:400;color:#111;letter-spacing:0.05px;">1254879856</div>
<div class="t" style="left:972.5px;top:462.50px;font-size:13px;line-height:13px;font-weight:400;color:#111;letter-spacing:0.05px;">20050 W 12 Mile Rd New York</div>
<div class="t" style="left:972.5px;top:482.50px;font-size:13px;line-height:13px;font-weight:400;color:#111;letter-spacing:0.05px;">Michigan 10001</div>
<div class="t" style="left:972.5px;top:502.50px;font-size:13px;line-height:13px;font-weight:400;color:#111;letter-spacing:0.05px;">NEW YORK, New York</div>
<div class="t" style="left:972.5px;top:522.50px;font-size:13px;line-height:13px;font-weight:400;color:#111;letter-spacing:0.05px;">United States - 10001</div>
<div class="t" style="left:972.5px;top:542.50px;font-size:13px;line-height:13px;font-weight:400;color:#111;letter-spacing:0.05px;">Registration Number :</div>
<div class="t" style="left:972.5px;top:562.50px;font-size:13px;line-height:13px;font-weight:400;color:#111;letter-spacing:0.05px;">U72200MH2LC123456</div>
<div class="t" style="left:972.5px;top:582.50px;font-size:13px;line-height:13px;font-weight:400;color:#111;letter-spacing:0.05px;">GST Number :</div>
<div class="t" style="left:972.5px;top:602.50px;font-size:13px;line-height:13px;font-weight:400;color:#111;letter-spacing:0.05px;">07AAGFF2194N1Z1</div>
<div class="t" style="left:1206px;top:382.93px;font-size:12.6px;line-height:12.6px;font-weight:700;color:#111;letter-spacing:0px;">Number:</div>
<div class="t" style="right:94.29999999999995px;top:381.80px;font-size:13px;line-height:13px;font-weight:400;color:#111;letter-spacing:0.35px;">#INV00001</div>
<div class="t" style="left:1206px;top:398.93px;font-size:12.6px;line-height:12.6px;font-weight:700;color:#111;letter-spacing:0px;">Issue Date:</div>
<div class="t" style="right:94.29999999999995px;top:397.80px;font-size:13px;line-height:13px;font-weight:400;color:#111;letter-spacing:0.35px;">28-10-2024</div>
<div class="t" style="left:1206px;top:414.93px;font-size:12.6px;line-height:12.6px;font-weight:700;color:#111;letter-spacing:0px;">Due Date:</div>
<div class="t" style="right:94.29999999999995px;top:413.80px;font-size:13px;line-height:13px;font-weight:400;color:#111;letter-spacing:0.35px;">28-10-2024</div>
<div class="t" style="left:978.5px;top:669.63px;font-size:12.6px;line-height:12.6px;font-weight:700;color:#111;letter-spacing:0px;">Bill To:</div>
<div class="t" style="right:100px;top:669.63px;font-size:12.6px;line-height:12.6px;font-weight:700;color:#111;letter-spacing:0px;">Ship To:</div>
<div class="t" style="left:978.5px;top:694.70px;font-size:13px;line-height:13px;font-weight:400;color:#111;letter-spacing:0.05px;">&lt;Customer Name&gt;</div>
<div class="t" style="right:100px;top:694.70px;font-size:13px;line-height:13px;font-weight:400;color:#111;letter-spacing:0.05px;">&lt;Customer Name&gt;</div>
<div class="t" style="left:978.5px;top:714.70px;font-size:13px;line-height:13px;font-weight:400;color:#111;letter-spacing:0.05px;">&lt;Address&gt;</div>
<div class="t" style="right:100px;top:714.70px;font-size:13px;line-height:13px;font-weight:400;color:#111;letter-spacing:0.05px;">&lt;Address&gt;</div>
<div class="t" style="left:978.5px;top:734.70px;font-size:13px;line-height:13px;font-weight:400;color:#111;letter-spacing:0.05px;">&lt;City&gt; , &lt;State&gt; , &lt;Zip&gt;</div>
<div class="t" style="right:100px;top:734.70px;font-size:13px;line-height:13px;font-weight:400;color:#111;letter-spacing:0.05px;">&lt;City&gt; , &lt;State&gt; , &lt;Zip&gt;</div>
<div class="abs" style="left:938px;top:748px;width:637px;height:19px;background:#eceef1"></div>
<div class="abs" style="left:577px;top:747px;width:361px;height:20px;background:#eceef1"></div>
<div class="abs" style="left:577px;top:767px;width:998px;height:200px;background:#fff;border-radius:6px;box-shadow:0 0 20px rgba(40,50,70,.05)"></div>
<div class="abs" style="left:576.5px;top:783.7px;width:3px;height:25.2px;border-radius:2px;background:#0caf60"></div>
<div class="t" style="left:598.7px;top:788.75px;font-size:14px;line-height:14px;font-weight:700;color:#1c1c1c;letter-spacing:-0.38px;">Purchase Print Settings</div>
<div class="t" style="left:597.7px;top:810.19px;font-size:9.7px;line-height:9.7px;font-weight:400;color:#8a93a1;letter-spacing:0px;">Edit details about your Company Bill</div>
<div class="abs" style="left:577px;top:842px;width:998px;height:1px;background:#eff1f3"></div>
<div class="t" style="left:598px;top:868.59px;font-size:12px;line-height:12px;font-weight:700;color:#333c4a;letter-spacing:-0.1px;">Prefix</div>
<div class="t" style="left:842px;top:868.59px;font-size:12px;line-height:12px;font-weight:700;color:#333c4a;letter-spacing:-0.05px;">Footer Title</div>
<div class="t" style="left:1086px;top:868.59px;font-size:12px;line-height:12px;font-weight:700;color:#333c4a;letter-spacing:-0.05px;">Footer Notes</div>
<div class="abs" style="left:598px;top:889px;width:224px;height:34px;border:1px solid #d5d9df;border-radius:5px;background:#fff;"></div>
<div class="abs" style="left:842px;top:889px;width:224px;height:34px;border:1px solid #d5d9df;border-radius:5px;background:#fff;"></div>
<div class="abs" style="left:1086px;top:889px;width:468px;height:34px;border:1px solid #d5d9df;border-radius:5px;background:#fff;"></div>
</body></html>
